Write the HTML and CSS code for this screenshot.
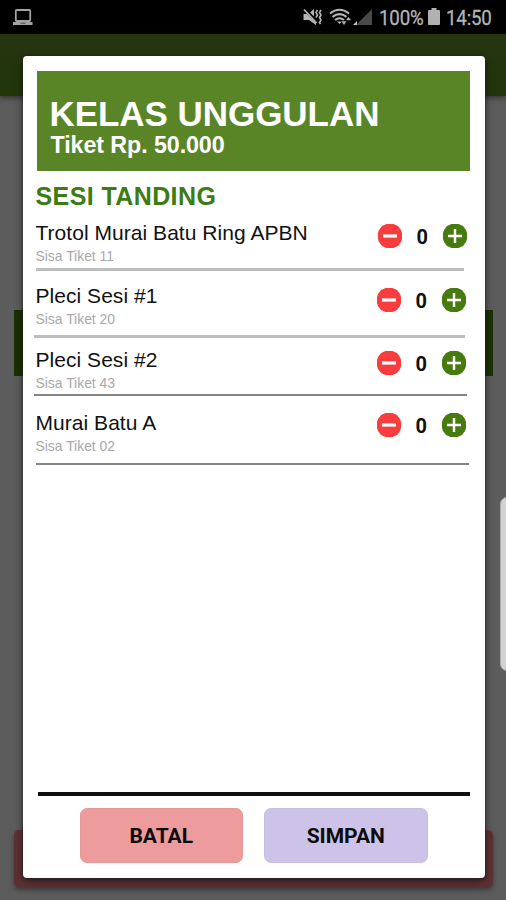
FILE: index.html
```html
<!DOCTYPE html>
<html lang="id">
<head>
<meta charset="utf-8">
<title>Kelas Unggulan</title>
<link rel="stylesheet" href="styles.css">
</head>
<body>
<svg width="0" height="0" class="defs">
  <symbol id="minus" viewBox="0 0 24 24"><path d="M8.500 0h7L20 2l3 4 1 3v6l-1 3-3 4-4.500 2h-7L4 22l-3-4-1-3V9l1-3 3-4z" fill="#f93c3e"/><path d="M5 12h14" stroke="#fff" stroke-width="3.200"/></symbol>
  <symbol id="plus" viewBox="0 0 24 24"><path d="M8.500 0h7L20 2l3 4 1 3v6l-1 3-3 4-4.500 2h-7L4 22l-3-4-1-3V9l1-3 3-4z" fill="#477b10"/><path d="M5 12h14M12 5v14" stroke="#fff" stroke-width="2.400"/></symbol>
</svg>
<div class="screen">
  <header class="status">
    <svg class="laptop" width="20" height="17" viewBox="0 0 20 17" fill="none" stroke="#a2a2a2"><rect x="2.800" y="2" width="14.400" height="11" rx="1" stroke-width="1.800"/><path d="M0 15.500h19.500" stroke-width="3"/><path d="M7.500 15.200h5" stroke="#444"/></svg>
    <div class="indicators">
      <svg width="70" height="20" viewBox="0 0 70 20">
        <path d="M.5 6H4l9 9v2l-7-5H.5zM7 4.500l4-3.500v7.500z" fill="#b5b5b5"/>
        <path d="M1 1.500l12.500 13.500" stroke="#b5b5b5" stroke-width="1.800"/>
        <path d="M14.500 2l-1.500 2.500 1.500 2.500-1.500 2.500M18 2l-1.500 2.500L18 7l-1.500 2.500L18 12l-1.500 2.500 1 1.500" fill="none" stroke="#b5b5b5" stroke-width="1.600"/>
        <path d="M27 5.500Q36.500-2 46 5.500M29.500 8.800q7-5.500 14 0M32 12q4.500-3.500 9 0" fill="none" stroke="#b5b5b5" stroke-width="2.100"/>
        <path d="M34 13.500h5L36.500 16z" fill="#b5b5b5"/>
        <path d="M38 13h6l-3 4.500zM42.500 12.500h6l-3-4z" fill="#b5b5b5" stroke="#000" stroke-width=".6"/>
        <path d="M69 1v16H53z" fill="#494949"/><path d="M54 13v4h-4z" fill="#c4c4c4"/>
      </svg>
      <span class="charge">100%</span>
      <svg class="battery" width="12" height="18" viewBox="0 0 12 18"><path d="M3.500 0h5v2H11q1 0 1 1v13q0 1-1 1H1q-1 0-1-1V3q0-1 1-1h2.500z" fill="#b1b1b1"/></svg>
      <span class="clock">14:50</span>
    </div>
  </header>
  <div class="appbar"></div>
  <main class="page">
    <div class="band"></div>
    <div class="order"></div>
  </main>
  <div class="handle"></div>

  <section class="dialog">
    <div class="banner">
      <h1>KELAS UNGGULAN</h1>
      <p>Tiket Rp. 50.000</p>
    </div>
    <h2>SESI TANDING</h2>
    <ul class="sessions">
      <li class="session first">
        <div class="info"><h3>Trotol Murai Batu Ring APBN</h3><p>Sisa Tiket 11</p></div>
        <div class="counter"><svg><use href="#minus"/></svg><b>0</b><svg><use href="#plus"/></svg></div>
      </li>
      <li class="session second">
        <div class="info"><h3>Pleci Sesi #1</h3><p>Sisa Tiket 20</p></div>
        <div class="counter"><svg><use href="#minus"/></svg><b>0</b><svg><use href="#plus"/></svg></div>
      </li>
      <li class="session third">
        <div class="info"><h3>Pleci Sesi #2</h3><p>Sisa Tiket 43</p></div>
        <div class="counter"><svg><use href="#minus"/></svg><b>0</b><svg><use href="#plus"/></svg></div>
      </li>
      <li class="session fourth">
        <div class="info"><h3>Murai Batu A</h3><p>Sisa Tiket 02</p></div>
        <div class="counter"><svg><use href="#minus"/></svg><b>0</b><svg><use href="#plus"/></svg></div>
      </li>
    </ul>
    <footer class="actions">
      <button class="cancel">BATAL</button>
      <button class="save">SIMPAN</button>
    </footer>
  </section>
</div>
</body>
</html>
```
FILE: styles.css
```css
* { box-sizing: border-box; }
body, h1, h2, h3, p, ul { margin: 0; padding: 0; }
body { font-family: "Liberation Sans", Arial, sans-serif; }
.defs { display: block; }
.screen {
  position: relative;
  display: flex;
  flex-direction: column;
  height: 900px;
  overflow: hidden;
  background: #5c5c5c;
}
.status {
  display: flex;
  justify-content: space-between;
  align-items: flex-start;
  height: 34px;
  padding: 8px 14px 0 13px;
  background: #000;
}
.indicators {
  display: flex;
  color: #b5b5b5;
  font: 21px/20px Roboto, sans-serif;
}
.charge { width: 49px; margin-left: 6px; }
.battery { margin-right: 6px; }
.clock { width: 46px; }
.indicators span {
  white-space: nowrap;
  letter-spacing: -0.2px;
  transform: scaleX(.89);
  transform-origin: left;
  -webkit-text-stroke: 0.3px #b5b5b5;
}
.appbar {
  height: 62px;
  background: linear-gradient(#263511, #21350b);
  box-shadow: 0 2px 5px #333;
}
.page {
  flex: 1;
  display: flex;
  flex-direction: column;
  justify-content: space-between;
  padding: 214px 13px 13px 14px;
}
.band { height: 66px; background: #1b3003; }
.order {
  height: 57px;
  border-radius: 5px;
  background: #5d3133;
  box-shadow: 0 3px 5px #3a3a3a;
}
.handle {
  position: absolute;
  top: 497px;
  right: -8px;
  width: 14px;
  height: 174px;
  border: 1px solid #aaa;
  border-radius: 7px;
  background: #d2d2d2;
}
.dialog {
  position: absolute;
  inset: 56px 21px 22px 22.500px;
  display: flex;
  flex-direction: column;
  padding: 15px 15px 15px 14px;
  border-radius: 4px;
  background: #fff;
  box-shadow: 0 1px 3px #222, 0 3px 8px rgba(0, 0, 0, .45);
}
.banner {
  height: 99.500px;
  padding: 23px 0 0 13px;
  background: #598527;
  color: #fff;
}
.banner h1 { font-size: 35px; line-height: 40px; letter-spacing: -0.050px; }
.banner p {
  font-size: 23.300px;
  font-weight: bold;
  line-height: 24px;
  letter-spacing: -0.100px;
  margin-top: -1px;
  padding-left: 1px;
}
h2 {
  height: 50px;
  padding-top: 11px;
  color: #3d7c12;
  font-size: 25px;
  line-height: 28px;
  letter-spacing: 0.400px;
  margin-left: -1px;
}
.sessions { flex: 1; list-style: none; }
.session {
  display: flex;
  justify-content: space-between;
  margin-left: -1px;
  border-bottom: 3px solid #bdbdbd;
}
.info { white-space: nowrap; }
.info h3 { color: #111; font-size: 21px; font-weight: normal; line-height: 24px; letter-spacing: 0.040px; }
.info p { color: #a8a8a8; font-size: 13.900px; line-height: 16px; margin-top: 3.400px; }
.counter { display: flex; align-items: center; height: 24px; }
.counter svg { width: 24px; height: 24px; }
.counter b { width: 41.500px; text-align: center; font: bold 20px/24px Roboto, sans-serif; color: #111; padding-top: 2px; }
.first { height: 50.500px; margin-right: 6px; }
.second { height: 66.500px; padding-top: 13px; margin: 0 5px 0 -3px; }
.third { height: 58.500px; padding-top: 10px; margin: 0 3px 0 -3px; }
.fourth { height: 68.500px; padding-top: 15px; margin-right: 1px; }
.first .counter { margin: 3px -3px 0 0; }
.second .counter { margin: 4px -1px 0 0; }
.third .counter { margin: 3px 1px 0 0; }
.fourth .counter { margin: 2px 3px 0 0; }
.second .info, .third .info { margin-left: 2px; }
.third, .fourth { border-bottom: 2px solid #858585; }
.actions {
  display: flex;
  gap: 21px;
  height: 71px;
  margin-left: 1px;
  padding: 12px 0 0 42px;
  border-top: 4px solid #111;
}
.actions button {
  width: 163.500px;
  height: 55px;
  padding: 0;
  border: 1px solid;
  border-radius: 7px;
  color: #0c0c0c;
  font: bold 21px Roboto, sans-serif;
}
.actions .cancel { background: #ed9b9c; border-color: #e5999a; }
.actions .save { background: #cdc2e7; border-color: #c7bfdf; }
```
